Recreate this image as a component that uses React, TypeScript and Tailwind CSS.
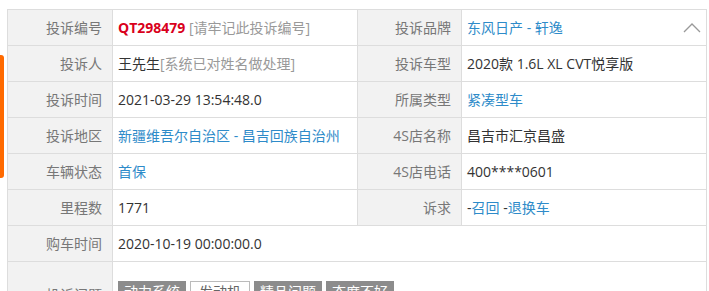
import React from "react";

const Label = ({ children, top }: { children: React.ReactNode; top?: boolean }) => (
  <td className="w-[104px] bg-[#f2f2f2] border border-[#dddddd] text-right pr-[10px] text-[#777777] align-middle">
    {children}
  </td>
);

const Val = ({ children, colSpan }: { children?: React.ReactNode; colSpan?: number }) => (
  <td colSpan={colSpan} className="border border-[#dddddd] pl-[5px] text-[#333333] align-middle">
    {children}
  </td>
);

const Link = ({ children }: { children: React.ReactNode }) => (
  <span className="text-[#2e8bc9]">{children}</span>
);

export default function App() {
  return (
    <div className="relative w-[709px] h-[291px] overflow-hidden bg-white font-['Open_Sans','Noto_Sans_CJK_SC',sans-serif] text-[14px]">
      <div className="absolute left-0 top-[55px] w-[4px] h-[123px] bg-[#ff6a00] rounded-r-[3px]" />
      <div className="pl-[7px] pt-[9px]">
        <table className="border-collapse table-fixed w-[699px]">
          <colgroup>
            <col className="w-[105px]" />
            <col className="w-[245px]" />
            <col className="w-[104px]" />
            <col className="w-[245px]" />
          </colgroup>
          <tbody>
            <tr className="h-[36px]">
              <Label>投诉编号</Label>
              <Val>
                <span className="text-[#d9001b] font-bold">QT298479</span>{" "}
                <span className="text-[#999999]">[请牢记此投诉编号]</span>
              </Val>
              <Label>投诉品牌</Label>
              <Val>
                <div className="flex items-center justify-between pr-[5px]">
                  <span>
                    <Link>东风日产</Link>
                    <span className="text-[#2e8bc9]"> - </span>
                    <Link>轩逸</Link>
                  </span>
                  <svg width="18" height="11" viewBox="0 0 18 11">
                    <path d="M1 10 L9 2 L17 10" fill="none" stroke="#999999" strokeWidth="1.3" />
                  </svg>
                </div>
              </Val>
            </tr>
            <tr className="h-[36px]">
              <Label>投诉人</Label>
              <Val>
                王先生<span className="text-[#999999]">[系统已对姓名做处理]</span>
              </Val>
              <Label>投诉车型</Label>
              <Val>2020款 1.6L XL CVT悦享版</Val>
            </tr>
            <tr className="h-[36px]">
              <Label>投诉时间</Label>
              <Val>2021-03-29 13:54:48.0</Val>
              <Label>所属类型</Label>
              <Val>
                <Link>紧凑型车</Link>
              </Val>
            </tr>
            <tr className="h-[36px]">
              <Label>投诉地区</Label>
              <Val>
                <Link>新疆维吾尔自治区</Link>
                <span className="text-[#2e8bc9]"> - </span>
                <Link>昌吉回族自治州</Link>
              </Val>
              <Label>4S店名称</Label>
              <Val>昌吉市汇京昌盛</Val>
            </tr>
            <tr className="h-[36px]">
              <Label>车辆状态</Label>
              <Val>
                <Link>首保</Link>
              </Val>
              <Label>4S店电话</Label>
              <Val>400****0601</Val>
            </tr>
            <tr className="h-[36px]">
              <Label>里程数</Label>
              <Val>1771</Val>
              <Label>诉求</Label>
              <Val>
                -<Link>召回</Link> -<Link>退换车</Link>
              </Val>
            </tr>
            <tr className="h-[36px]">
              <Label>购车时间</Label>
              <Val colSpan={3}>2020-10-19 00:00:00.0</Val>
            </tr>
            <tr className="h-[66px]">
              <Label>投诉问题</Label>
              <td colSpan={3} className="border border-[#dddddd] pl-[5px] pt-[19px] text-[#333333] align-top">
                <div className="flex items-start gap-[4px]">
                  <span className="bg-[#8c8c8c] text-white px-[6px] leading-[22px]">动力系统</span>
                  <span className="bg-white border border-[#bbbbbb] text-[#666666] px-[8px] leading-[20px]">发动机</span>
                  <span className="bg-[#8c8c8c] text-white px-[6px] leading-[22px]">精品问题</span>
                  <span className="bg-[#8c8c8c] text-white px-[6px] leading-[22px]">态度不好</span>
                </div>
              </td>
            </tr>
          </tbody>
        </table>
      </div>
    </div>
  );
}
